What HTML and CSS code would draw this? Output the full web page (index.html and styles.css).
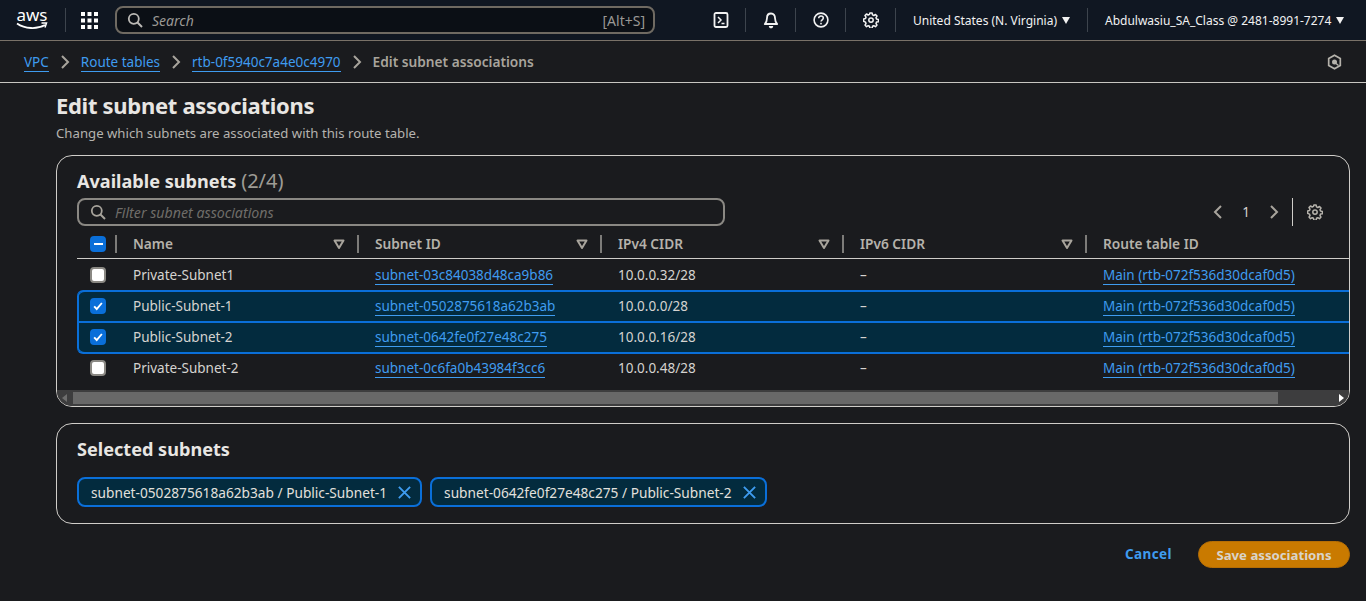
FILE: index.html
```html
<!DOCTYPE html>
<html lang="en">

<head>
    <meta charset="UTF-8">
    <title>Edit subnet associations</title>
    <link rel="stylesheet" href="styles.css">
</head>

<body>
    <svg class="defs" width="0" height="0">
        <defs>
            <symbol id="gear" viewBox="0 0 16 16">
                <path d="M6.9 1h2.2l.4 1.9 1.3.6 1.7-1 1.5 1.6-1 1.6.5 1.4 1.9.4v2.2l-1.9.4-.5 1.4 1 1.6-1.5 1.6-1.7-1-1.3.6-.4 1.9H6.9l-.4-1.9-1.3-.6-1.7 1-1.5-1.6 1-1.6-.5-1.4L.6 9.2V7l1.9-.4.5-1.4-1-1.6 1.5-1.6 1.7 1 1.3-.6z" fill="none" stroke="currentColor" stroke-width="1.5" stroke-linejoin="round"/>
                <circle cx="8" cy="8.1" r="2.2" fill="none" stroke="currentColor" stroke-width="1.5"/>
            </symbol>
            <symbol id="search" viewBox="0 0 16 16">
                <circle cx="6.8" cy="6.8" r="5" fill="none" stroke="currentColor" stroke-width="1.8"/>
                <path d="M10.5 10.5l4.5 4.5" stroke="currentColor" stroke-width="2"/>
            </symbol>
            <symbol id="filter" viewBox="0 0 12 12">
                <path d="M1.5 2.5h9L6 10z" fill="none" stroke="currentColor" stroke-width="2" stroke-linejoin="round"/>
            </symbol>
            <symbol id="chev" viewBox="0 0 10 16">
                <path d="M2 2l6 6-6 6" fill="none" stroke="currentColor" stroke-width="2"/>
            </symbol>
            <symbol id="check" viewBox="0 0 14 14">
                <path d="M2.5 7.5l3 3 6-7" fill="none" stroke="#fff" stroke-width="2.2"/>
            </symbol>
            <symbol id="close" viewBox="0 0 16 16">
                <path d="M2 2l12 12M14 2L2 14" stroke="currentColor" stroke-width="2"/>
            </symbol>
        </defs>
    </svg>

    <header class="topbar">
        <div class="aws-logo">
            <span class="aws-word">aws</span>
            <svg width="32" height="8" viewBox="0 0 32 8">
                <path d="M1 1.5c8 5.5 20 6 28 1.5" fill="none" stroke="#fff" stroke-width="1.8"/>
                <path d="M25.5 1h5L29 5.5" fill="none" stroke="#fff" stroke-width="1.5"/>
            </svg>
        </div>
        <span class="top-sep top-sep-logo"></span>
        <svg class="apps" width="17" height="17" viewBox="0 0 17 17" fill="#fff">
            <rect x="0" y="0" width="4" height="4"/><rect x="6.5" y="0" width="4" height="4"/><rect x="13" y="0" width="4" height="4"/>
            <rect x="0" y="6.5" width="4" height="4"/><rect x="6.5" y="6.5" width="4" height="4"/><rect x="13" y="6.5" width="4" height="4"/>
            <rect x="0" y="13" width="4" height="4"/><rect x="6.5" y="13" width="4" height="4"/><rect x="13" y="13" width="4" height="4"/>
        </svg>
        <div class="top-search">
            <svg class="top-search-icon" width="16" height="16"><use href="#search"/></svg>
            <span class="top-search-text">Search</span>
            <span class="top-search-key">[Alt+S]</span>
        </div>
        <div class="top-icon icon-first">
            <svg width="16" height="16" viewBox="0 0 16 16">
                <rect x="1.5" y="1" width="13" height="14" rx="1.5" fill="none" stroke="currentColor" stroke-width="1.8"/>
                <path d="M5 5l3 3-3 3M8.5 11.5h3" fill="none" stroke="currentColor" stroke-width="1.5"/>
            </svg>
        </div>
        <span class="top-sep"></span>
        <div class="top-icon">
            <svg width="16" height="17" viewBox="0 0 16 17">
                <path d="M8 1.5c-2.8 0-4 2-4 4.5 0 3-.8 4.5-2.2 6h12.400C12.800 10.500 12 9 12 6c0-2.500-1.200-4.500-4-4.500z" fill="none" stroke="currentColor" stroke-width="1.8" stroke-linejoin="round"/>
                <path d="M5.800 14h4.400c0 1.500-1 2.300-2.200 2.300S5.800 15.500 5.800 14z" fill="currentColor"/>
            </svg>
        </div>
        <span class="top-sep"></span>
        <div class="top-icon">
            <svg width="16" height="16" viewBox="0 0 16 16">
                <circle cx="8" cy="8" r="6.9" fill="none" stroke="currentColor" stroke-width="1.6"/>
                <path d="M5.7 6.2c0-1.400 1-2.200 2.300-2.200s2.300.8 2.300 2c0 1.800-2.300 1.800-2.300 3.600" fill="none" stroke="currentColor" stroke-width="1.5"/>
                <rect x="7.2" y="10.8" width="1.6" height="1.6" fill="currentColor"/>
            </svg>
        </div>
        <span class="top-sep"></span>
        <div class="top-icon">
            <svg width="16" height="16"><use href="#gear"/></svg>
        </div>
        <span class="top-sep"></span>
        <div class="top-menu top-menu-region">United States (N. Virginia)<span class="caret"></span></div>
        <span class="top-sep"></span>
        <div class="top-menu top-menu-account">Abdulwasiu_SA_Class @ 2481-8991-7274<span class="caret"></span></div>
    </header>

    <nav class="crumbs">
        <a class="link">VPC</a>
        <svg class="crumb-chev" width="10" height="16"><use href="#chev"/></svg>
        <a class="link">Route tables</a>
        <svg class="crumb-chev" width="10" height="16"><use href="#chev"/></svg>
        <a class="link">rtb-0f5940c7a4e0c4970</a>
        <svg class="crumb-chev" width="10" height="16"><use href="#chev"/></svg>
        <span class="crumb-current">Edit subnet associations</span>
        <svg class="crumb-hex" width="15" height="16" viewBox="0 0 15 16">
            <path d="M7.5 1.3l5.8 3.3v6.800l-5.8 3.300-5.800-3.300V4.600z" fill="none" stroke="currentColor" stroke-width="1.7"/>
            <circle cx="7.5" cy="8" r="2.5" fill="currentColor"/>
            <path d="M9 9.5l2.5 2" stroke="currentColor" stroke-width="1.5"/>
        </svg>
    </nav>

    <main class="content">
        <h1>Edit subnet associations</h1>
        <p class="subtitle">Change which subnets are associated with this route table.</p>

        <section class="card card-table">
            <h2>Available subnets <span class="count">(2/4)</span></h2>
            <div class="tools">
                <div class="filter">
                    <svg width="16" height="16"><use href="#search"/></svg>
                    <span>Filter subnet associations</span>
                </div>
                <div class="pager">
                    <svg class="pager-prev" width="10" height="16"><use href="#chev"/></svg>
                    <span class="pager-num">1</span>
                    <svg width="10" height="16"><use href="#chev"/></svg>
                    <span class="pager-sep"></span>
                    <svg class="pager-gear" width="16" height="16"><use href="#gear"/></svg>
                </div>
            </div>

            <div class="row row-head">
                <div class="cell cell-check"><span class="box box-on box-dash"></span><i class="col-sep"></i></div>
                <div class="cell">Name<svg class="sort" width="12" height="12"><use href="#filter"/></svg><i class="col-sep"></i></div>
                <div class="cell">Subnet ID<svg class="sort" width="12" height="12"><use href="#filter"/></svg><i class="col-sep"></i></div>
                <div class="cell">IPv4 CIDR<svg class="sort" width="12" height="12"><use href="#filter"/></svg><i class="col-sep"></i></div>
                <div class="cell">IPv6 CIDR<svg class="sort" width="12" height="12"><use href="#filter"/></svg><i class="col-sep"></i></div>
                <div class="cell">Route table ID</div>
            </div>

            <div class="row">
                <div class="cell cell-check"><span class="box"></span></div>
                <div class="cell">Private-Subnet1</div>
                <div class="cell"><a class="link">subnet-03c84038d48ca9b86</a></div>
                <div class="cell">10.0.0.32/28</div>
                <div class="cell">–</div>
                <div class="cell"><a class="link">Main (rtb-072f536d30dcaf0d5)</a></div>
            </div>
            <div class="row row-sel row-sel-first">
                <div class="cell cell-check"><span class="box box-on"><svg width="14" height="14"><use href="#check"/></svg></span></div>
                <div class="cell">Public-Subnet-1</div>
                <div class="cell"><a class="link">subnet-0502875618a62b3ab</a></div>
                <div class="cell">10.0.0.0/28</div>
                <div class="cell">–</div>
                <div class="cell"><a class="link">Main (rtb-072f536d30dcaf0d5)</a></div>
            </div>
            <div class="row row-sel row-sel-last">
                <div class="cell cell-check"><span class="box box-on"><svg width="14" height="14"><use href="#check"/></svg></span></div>
                <div class="cell">Public-Subnet-2</div>
                <div class="cell"><a class="link">subnet-0642fe0f27e48c275</a></div>
                <div class="cell">10.0.0.16/28</div>
                <div class="cell">–</div>
                <div class="cell"><a class="link">Main (rtb-072f536d30dcaf0d5)</a></div>
            </div>
            <div class="row">
                <div class="cell cell-check"><span class="box"></span></div>
                <div class="cell">Private-Subnet-2</div>
                <div class="cell"><a class="link">subnet-0c6fa0b43984f3cc6</a></div>
                <div class="cell">10.0.0.48/28</div>
                <div class="cell">–</div>
                <div class="cell"><a class="link">Main (rtb-072f536d30dcaf0d5)</a></div>
            </div>

            <div class="scrollbar">
                <span class="scroll-arrow scroll-left"></span>
                <span class="scroll-thumb"></span>
                <span class="scroll-arrow scroll-right"></span>
            </div>
        </section>

        <section class="card card-selected">
            <h2>Selected subnets</h2>
            <div class="tokens">
                <div class="token">subnet-0502875618a62b3ab / Public-Subnet-1<svg width="15" height="15"><use href="#close"/></svg></div>
                <div class="token">subnet-0642fe0f27e48c275 / Public-Subnet-2<svg width="15" height="15"><use href="#close"/></svg></div>
            </div>
        </section>

        <div class="actions">
            <a class="cancel">Cancel</a>
            <button class="save" type="button">Save associations</button>
        </div>
    </main>
</body>

</html>
```

FILE: styles.css
```css
body {
    margin: 0;
    background-color: #1a1b1e;
    color: #d5d3d0;
    font-family: "Noto Sans", sans-serif;
    font-size: 13.5px;
    height: 601px;
    overflow: hidden;
}

.defs {
    display: block;
    height: 0;
}

a {
    text-decoration: none;
}

.link {
    color: #3f9cf0;
    border-bottom: 1px solid #3f9cf0;
    line-height: 17px;
    padding-top: 2px;
}

/* top bar */
.topbar {
    display: flex;
    align-items: center;
    height: 40px;
    background-color: #101722;
    border-bottom: 1px solid #7a7268;
    color: #f2f2f2;
}

.aws-logo {
    display: flex;
    flex-direction: column;
    align-items: center;
    width: 32px;
    margin-left: 16px;
    height: 28px;
}

.aws-word {
    font-size: 17px;
    line-height: 17px;
    height: 16px;
    color: #fff;
}

.aws-logo svg {
    display: block;
}

.top-sep {
    width: 1px;
    height: 24px;
    background-color: #3d444d;
    flex: none;
}

.top-sep-logo {
    margin-left: 17px;
}

.apps {
    margin-left: 15px;
}

.top-search {
    display: flex;
    align-items: center;
    width: 540px;
    height: 28px;
    margin-left: 17px;
    padding: 0 8px 0 10px;
    box-sizing: border-box;
    background-color: #0b0f15;
    border: 2px solid #6f6a62;
    border-radius: 8px;
    font-size: 14px;
}

.top-search-icon {
    color: #bcbab6;
}

.top-search-text {
    margin-left: 9px;
    font-style: italic;
    color: #9a9894;
    flex: 1;
}

.top-search-key {
    color: #9a9894;
}

.top-icon {
    display: flex;
    justify-content: center;
    align-items: center;
    width: 49px;
    flex: none;
}

.icon-first {
    margin-left: 41px;
}

.top-menu {
    display: flex;
    align-items: center;
    font-size: 12px;
    white-space: nowrap;
}

.top-menu-region {
    padding-left: 17px;
    width: 174px;
    flex: none;
}

.top-menu-account {
    padding-left: 17px;
}

.caret {
    margin-left: 5px;
    border-left: 4px solid transparent;
    border-right: 4px solid transparent;
    border-top: 7px solid #f2f2f2;
    flex: none;
}

/* breadcrumbs */
.crumbs {
    display: flex;
    align-items: center;
    height: 41px;
    padding: 0 24px;
    border-bottom: 1px solid #c8c6c2;
    font-size: 13.5px;
}

.crumb-chev {
    margin: 0 11px;
    color: #a8a49c;
}

.crumb-current {
    color: #a8a49c;
    font-weight: 600;
    font-size: 13.7px;
}

.crumb-hex {
    margin-left: auto;
    color: #b5b2ab;
}

/* main */
.content {
    padding: 0 16px 0 56px;
}

h1 {
    margin: 7px 0 0;
    font-size: 22px;
    letter-spacing: -0.3px;
    line-height: 30px;
    font-weight: 700;
    color: #e8e6e3;
}

.subtitle {
    margin: 4px 0 0;
    font-size: 13.2px;
    line-height: 18px;
    color: #b5b3af;
}

.card {
    border: 1px solid #cfcdc9;
    border-radius: 16px;
    overflow: hidden;
}

h2 {
    margin: 0;
    font-size: 18.1px;
    line-height: 24px;
    font-weight: 700;
    color: #e8e6e3;
}

.count {
    font-weight: 400;
    font-size: 20px;
    color: #9e9b95;
}

.card-table {
    margin-top: 13px;
    height: 252px;
    box-sizing: border-box;
    padding-top: 13px;
    position: relative;
}

.card-table h2 {
    padding-left: 20px;
}

.tools {
    display: flex;
    align-items: center;
    margin-top: 5px;
    padding: 0 26px 0 20px;
}

.filter {
    display: flex;
    align-items: center;
    width: 648px;
    height: 28px;
    box-sizing: border-box;
    padding-left: 11px;
    border: 2px solid #8a8883;
    border-radius: 8px;
    color: #a8a49c;
}

.filter span {
    margin-left: 9px;
    font-size: 14.2px;
    font-style: italic;
    color: #6f6d69;
}

.pager {
    display: flex;
    align-items: center;
    margin-left: auto;
    color: #a8a49c;
}

.pager-prev {
    transform: scaleX(-1);
}

.pager-num {
    margin: 0 19px;
    color: #d5d3d0;
    width: 8px;
    text-align: center;
}

.pager-sep {
    width: 1px;
    height: 28px;
    background-color: #cfcdc9;
    margin: 0 14px 0 13px;
}

.pager-gear {
    color: #b5b2ab;
}

/* table */
.row {
    display: grid;
    grid-template-columns: 56px 242px 243px 242px 243px 1fr;
    height: 31px;
    margin-left: 20px;
    box-sizing: border-box;
    align-items: center;
}

.row-head {
    margin-top: 2px;
    padding-top: 1px;
    border-bottom: 1px solid #cfcdc9;
    font-weight: 600;
    font-size: 13.7px;
    color: #b5b2ab;
}

.cell {
    display: flex;
    align-items: center;
    height: 100%;
    white-space: nowrap;
}

.cell-check {
    padding-left: 13px;
}

.col-sep {
    width: 2px;
    height: 18px;
    background-color: #7d7c79;
    margin-left: 12px;
    margin-right: 16px;
}

.cell-check .col-sep {
    margin-left: 9px;
}

.sort {
    margin-left: auto;
    color: #a8a49c;
}

.box {
    display: flex;
    justify-content: center;
    align-items: center;
    width: 12px;
    height: 12px;
    background-color: #fff;
    border: 2px solid #8a8883;
    border-radius: 4px;
    flex: none;
}

.box-on {
    background-color: #0a6fd9;
    border-color: #0a6fd9;
}

.box-dash::after {
    content: "";
    flex: none;
    width: 9px;
    height: 2px;
    background-color: #fff;
}

.row-sel {
    background-color: #032b3e;
    border-top: 2px solid #0a6fd9;
    padding-bottom: 2px;
    box-shadow: inset 2px 0 0 #0a6fd9;
}

.row-sel-first {
    border-top-left-radius: 6px;
}

.row-sel-last {
    border-bottom: 2px solid #0a6fd9;
    border-bottom-left-radius: 6px;
    height: 33px;
    margin-bottom: -2px;
}

/* horizontal scroll */
.scrollbar {
    position: absolute;
    left: 0;
    right: 0;
    bottom: 0;
    height: 16px;
    background-color: #3d3d3e;
}

.scroll-thumb {
    position: absolute;
    left: 16px;
    width: 1205px;
    top: 2px;
    bottom: 2px;
    background-color: #686868;
}

.scroll-arrow {
    position: absolute;
    top: 4px;
    border-top: 4px solid transparent;
    border-bottom: 4px solid transparent;
}

.scroll-left {
    left: 5px;
    border-right: 5px solid #6d6d6d;
}

.scroll-right {
    right: 5px;
    border-left: 5px solid #fff;
}

/* selected */
.card-selected {
    margin-top: 16px;
    height: 101px;
    box-sizing: border-box;
    padding: 13px 20px 0;
}

.tokens {
    display: flex;
    gap: 8px;
    margin-top: 16px;
}

.token {
    display: flex;
    align-items: center;
    height: 30px;
    box-sizing: border-box;
    padding: 0 8px 0 12px;
    background-color: #032b3e;
    border: 2px solid #0a6fd9;
    border-radius: 8px;
    color: #e2e0dd;
    font-size: 13.7px;
    white-space: nowrap;
}

.token svg {
    margin-left: 10px;
    color: #3f9cf0;
}

/* footer buttons */
.actions {
    display: flex;
    justify-content: flex-end;
    align-items: center;
    margin-top: 17px;
}

.cancel {
    color: #3f9cf0;
    font-weight: 700;
    font-size: 13.5px;
    letter-spacing: 0.4px;
    margin-right: 26px;
    padding-bottom: 2px;
}

.save {
    height: 27px;
    width: 152px;
    background-color: #c97a00;
    border: 1px solid #b56e05;
    border-radius: 14px;
    color: #d9d4ca;
    font-family: "Noto Sans", sans-serif;
    font-size: 13.2px;
    font-weight: 700;
    padding: 0;
}
```
